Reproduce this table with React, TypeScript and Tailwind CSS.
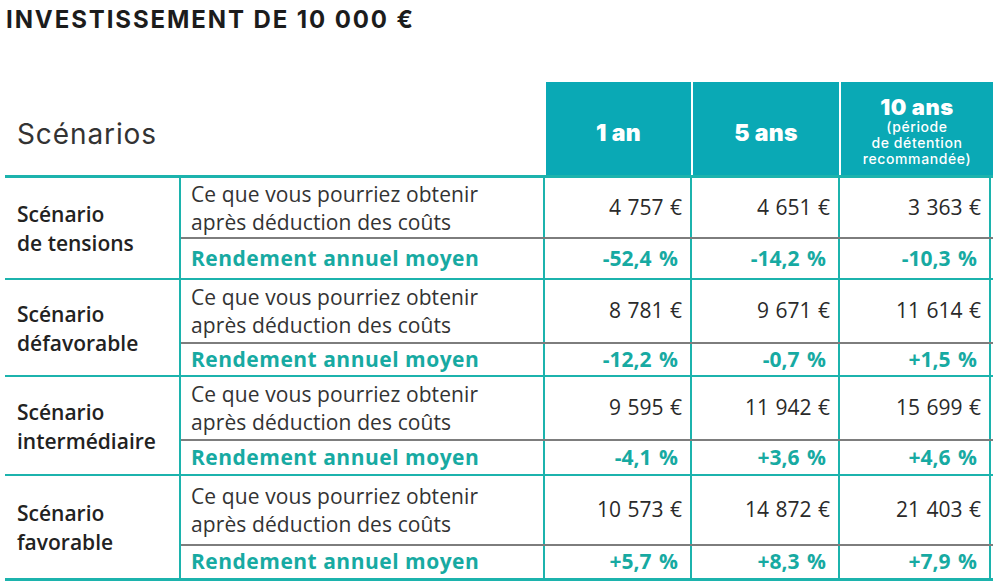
import React from 'react'

interface Scenario {
  name: string[]
  amounts: string[]
  returns: string[]
  topH: string
  bottomH: string
}

const scenarios: Scenario[] = [
  { name: ['Scénario', 'de tensions'], amounts: ['4 757 €', '4 651 €', '3 363 €'], returns: ['-52,4 %', '-14,2 %', '-10,3 %'], topH: 'h-[61px]', bottomH: 'h-[39px]' },
  { name: ['Scénario', 'défavorable'], amounts: ['8 781 €', '9 671 €', '11 614 €'], returns: ['-12,2 %', '-0,7 %', '+1,5 %'], topH: 'h-[64px]', bottomH: 'h-[31px]' },
  { name: ['Scénario', 'intermédiaire'], amounts: ['9 595 €', '11 942 €', '15 699 €'], returns: ['-4,1 %', '+3,6 %', '+4,6 %'], topH: 'h-[64px]', bottomH: 'h-[33px]' },
  { name: ['Scénario', 'favorable'], amounts: ['10 573 €', '14 872 €', '21 403 €'], returns: ['+5,7 %', '+8,3 %', '+7,9 %'], topH: 'h-[70px]', bottomH: 'h-[32px]' },
]

const valueWidths = ['w-[147px]', 'w-[148px]', 'w-[151px]']

export default function App() {
  return (
    <div className="w-[1000px] h-[584px] bg-white overflow-hidden font-['Open_Sans',sans-serif] text-[#2a2a2a]">
      <div className="pl-[6px] pt-[6px] font-['Inter',sans-serif] font-bold text-[24px] leading-[28px] text-[#1c1c1c] tracking-[1.9px] whitespace-nowrap">
        INVESTISSEMENT DE 10 000 €
      </div>

      <div className="ml-[5px] mt-[48px] w-[988px]">
        {/* header */}
        <div className="flex h-[93px]">
          <div className="w-[541px] flex items-center pl-[12px] pt-[10px] font-['Inter',sans-serif] text-[28px] tracking-[0.9px] text-[#333]">
            Scénarios
          </div>
          <div className="w-[147px] bg-[#0aa9b5] border-r-2 border-white flex items-center justify-center pt-[10px] font-['Inter',sans-serif] font-black text-white text-[23px] tracking-[0.3px]">
            1 an
          </div>
          <div className="w-[148px] bg-[#0aa9b5] border-r-2 border-white flex items-center justify-center pt-[10px] font-['Inter',sans-serif] font-black text-white text-[23px] tracking-[0.3px]">
            5 ans
          </div>
          <div className="w-[152px] bg-[#0aa9b5] flex flex-col items-center justify-center pt-[4px] text-white font-['Inter',sans-serif]">
            <span className="font-black text-[22px] leading-[24px] tracking-[0.5px]">10 ans</span>
            <span className="text-[14px] leading-[16px] font-medium tracking-[0.6px]">(période</span>
            <span className="text-[14px] leading-[16px] font-medium tracking-[0.6px]">de détention</span>
            <span className="text-[14px] leading-[16px] font-medium tracking-[0.6px]">recommandée)</span>
          </div>
        </div>

        {/* body */}
        <div className="border-t-[3px] border-b-[3px] border-[#1cb3ad]">
          {scenarios.map((s, i) => (
            <div key={i} className={`flex ${i > 0 ? 'border-t-2 border-[#1cb3ad]' : ''}`}>
              <div className="w-[176px] border-r-2 border-[#1cb3ad] flex flex-col justify-center pl-[12px] pt-[2px] text-[21px] leading-[29px] font-semibold text-[#222]">
                {s.name.map((n) => (
                  <span key={n}>{n}</span>
                ))}
              </div>
              <div className="flex-1 flex flex-col">
                <div className={`flex ${s.topH} border-b-2 border-[#7d7d7d]`}>
                  <div className="w-[364px] border-r-2 border-[#1cb3ad] flex flex-col justify-center pl-[10px] text-[21px] leading-[28px] tracking-[0.1px] text-[#333] whitespace-nowrap">
                    <span>Ce que vous pourriez obtenir</span>
                    <span>après déduction des coûts</span>
                  </div>
                  {s.amounts.map((a, j) => (
                    <div
                      key={j}
                      className={`${valueWidths[j]} border-r-2 border-[#1cb3ad] flex items-center justify-end pr-[8px] text-[21px] [word-spacing:1px] text-[#2a2a2a] whitespace-nowrap`}
                    >
                      {a}
                    </div>
                  ))}
                </div>
                <div className={`flex ${s.bottomH}`}>
                  <div className="w-[364px] border-r-2 border-[#1cb3ad] flex items-center pl-[10px] text-[21px] font-bold tracking-[0.5px] text-[#17aaa2] whitespace-nowrap">
                    Rendement annuel moyen
                  </div>
                  {s.returns.map((r, j) => (
                    <div
                      key={j}
                      className={`${valueWidths[j]} border-r-2 border-[#1cb3ad] flex items-center justify-end pr-[12px] text-[21px] font-bold [word-spacing:2px] text-[#17aaa2] whitespace-nowrap`}
                    >
                      {r}
                    </div>
                  ))}
                </div>
              </div>
            </div>
          ))}
        </div>
      </div>
    </div>
  )
}
